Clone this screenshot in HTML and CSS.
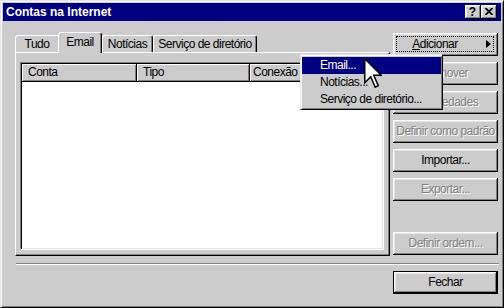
FILE: index.html
```html
<!DOCTYPE html>
<html lang="pt">
<head>
<meta charset="utf-8">
<title>Contas na Internet</title>
<link rel="stylesheet" href="styles.css">
</head>
<body>
<div class="window">
  <div class="titlebar">
    <span class="title">Contas na Internet</span>
    <div class="tbtns">
      <span class="tbtn help">?</span>
      <span class="tbtn close"><svg width="8" height="7" viewBox="0 0 8 7"><path d="M0.5 0 L7.5 7 M7.5 0 L0.5 7" stroke="#000" stroke-width="1.7" fill="none"/></svg></span>
    </div>
  </div>
  <div class="content">
    <div class="main">
      <div class="tabctl">
        <div class="tabstrip">
          <div class="tab t1">Tudo</div>
          <div class="tab t2 sel">Email</div>
          <div class="tab t3">Notícias</div>
          <div class="tab t4">Serviço de diretório</div>
        </div>
        <div class="panel">
          <div class="listbox">
            <div class="lhead">
              <div class="col c1">Conta</div>
              <div class="col c2">Tipo</div>
              <div class="col c3">Conexão</div>
            </div>
          </div>
        </div>
      </div>
      <div class="btncol">
        <button class="btn add"><span class="lbl"><u>A</u>dicionar</span><span class="arrow"></span><span class="focusrect"></span></button>
        <button class="btn dis">Remover</button>
        <button class="btn dis">Propriedades</button>
        <button class="btn dis">Definir como padrão</button>
        <button class="btn">Importar...</button>
        <button class="btn dis">Exportar...</button>
        <button class="btn dis last">Definir ordem...</button>
      </div>
    </div>
    <div class="sep"></div>
    <div class="bottom">
      <button class="btn default">Fechar</button>
    </div>
  </div>
  <div class="menu">
    <div class="mi hl">Email...</div>
    <div class="mi">Notícias...</div>
    <div class="mi">Serviço de diretório...</div>
  </div>
  <svg class="cursor" width="18" height="30" viewBox="0 0 12 20"><path d="M0.5 0.5 V16.5 L4.5 12.5 L7.5 19.5 L9.5 18.5 L6.5 11.5 H11.5 Z" fill="#fff" stroke="#000" stroke-width="1" stroke-linejoin="miter"/></svg>
</div>
</body>
</html>
```
FILE: styles.css
```css
html, body {
  margin: 0;
  padding: 0;
  background: #cccccc;
}
body {
  font-family: "Liberation Sans", Arial, sans-serif;
  font-size: 12px;
  letter-spacing: -0.5px;
  color: #000;
}
.window {
  position: relative;
  width: 504px;
  height: 308px;
  box-sizing: border-box;
  border: 1px solid;
  border-color: #e4e4e4 #000 #000 #e4e4e4;
  box-shadow: inset 1px 1px #fff, inset -1px -1px #808080;
  padding: 2px;
  background: #cccccc;
  display: flex;
  flex-direction: column;
  overflow: hidden;
}
.titlebar {
  height: 18px;
  flex: none;
  background: #000080;
  color: #fff;
  display: flex;
  align-items: center;
  justify-content: space-between;
  padding: 0 4px 0 3px;
}
.title {
  font-weight: bold;
  letter-spacing: 0;
  line-height: 18px;
}
.tbtns {
  display: flex;
}
.tbtn {
  width: 16px;
  height: 14px;
  box-sizing: border-box;
  background: #cccccc;
  box-shadow: inset -1px -1px #000, inset 1px 1px #fff, inset -2px -2px #808080, inset 2px 2px #e4e4e4;
  display: flex;
  align-items: center;
  justify-content: center;
  color: #000;
  font-weight: bold;
  font-size: 12px;
  letter-spacing: 0;
  line-height: 14px;
}
.tbtn.help {
  padding: 0 1px 1px 0;
}
.tbtn.close svg {
  display: block;
  margin: 0 1px 1px 0;
}
.content {
  flex: 1;
  padding: 11px 3px 0 12px;
  display: flex;
  flex-direction: column;
}
.main {
  display: flex;
  gap: 3px;
  height: 224px;
}
.tabctl {
  width: 375px;
  display: flex;
  flex-direction: column;
}
.tabstrip {
  height: 20px;
  display: flex;
  align-items: flex-end;
  position: relative;
  z-index: 1;
}
.tab {
  height: 17px;
  box-sizing: border-box;
  border-top: 1px solid #fff;
  border-left: 1px solid #fff;
  border-right: 1px solid #000;
  box-shadow: inset -1px 0 #808080;
  border-radius: 3px 3px 0 0;
  text-align: center;
  padding-top: 1px;
  line-height: 15px;
  white-space: nowrap;
  background: #cccccc;
}
.tab.sel {
  height: 21px;
  margin-bottom: -1px;
  padding-top: 2px;
}
.t1 { width: 43px; border-right: none; box-shadow: none; border-radius: 3px 0 0 0; }
.t2 { width: 44px; }
.t3 { width: 51px; }
.t4 { width: 104px; }
.panel {
  height: 204px;
  box-sizing: border-box;
  border: 1px solid;
  border-color: #fff #000 #000 #fff;
  box-shadow: inset -1px -1px #808080;
  padding: 9px 5px 5px 4px;
}
.listbox {
  height: 188px;
  box-sizing: border-box;
  border: 1px solid;
  border-color: #808080 #fff #fff #808080;
  box-shadow: inset 1px 1px #000, inset -1px -1px #e4e4e4;
  background: #fff;
  padding: 1px;
}
.lhead {
  display: flex;
  height: 18px;
}
.col {
  box-sizing: border-box;
  height: 18px;
  background: #cccccc;
  box-shadow: inset -1px -1px #000, inset 1px 1px #fff, inset -2px -2px #808080;
  line-height: 17px;
  padding-left: 6px;
  white-space: nowrap;
  overflow: hidden;
}
.c1 { width: 115px; }
.c2 { width: 113px; }
.c3 { flex: 1; padding-left: 3px; }
.btncol {
  width: 105px;
  display: flex;
  flex-direction: column;
  gap: 6px;
  padding-top: 1px;
}
.btn {
  position: relative;
  height: 23px;
  width: 105px;
  flex: none;
  box-sizing: border-box;
  border: none;
  margin: 0;
  padding: 0;
  background: #cccccc;
  box-shadow: inset -1px -1px #000, inset 1px 1px #fff, inset -2px -2px #808080, inset 2px 2px #e4e4e4;
  font: inherit;
  letter-spacing: inherit;
  color: #000;
  text-align: center;
  line-height: 21px;
  white-space: nowrap;
}
.btn.dis {
  color: #808080;
  text-shadow: 1px 1px #fff;
}
.btn.last {
  margin-top: auto;
  margin-bottom: 1px;
}
.btn.add .lbl {
  display: block;
  padding-right: 21px;
}
.arrow {
  position: absolute;
  right: 7px;
  top: 7px;
  width: 0;
  height: 0;
  border-left: 5px solid #000;
  border-top: 4.5px solid transparent;
  border-bottom: 4.5px solid transparent;
}
.focusrect {
  position: absolute;
  top: 3px;
  left: 3px;
  right: 4px;
  bottom: 4px;
  border: 1px dotted #000;
}
.sep {
  height: 2px;
  box-sizing: border-box;
  margin: 7px -1px 0 1px;
  border-top: 1px solid #808080;
  border-bottom: 1px solid #fff;
}
.bottom {
  display: flex;
  justify-content: flex-end;
  margin-top: 6px;
}
.btn.default {
  border: 1px solid #000;
  line-height: 19px;
}
.menu {
  position: absolute;
  left: 299px;
  top: 53px;
  width: 143px;
  box-sizing: border-box;
  border: 1px solid;
  border-color: #e4e4e4 #000 #000 #e4e4e4;
  box-shadow: inset 1px 1px #fff, inset -1px -1px #808080;
  padding: 2px 1px 1px 1px;
  background: #cccccc;
  z-index: 5;
}
.mi {
  height: 17px;
  line-height: 17px;
  padding-left: 18px;
  white-space: nowrap;
}
.mi.hl {
  background: #000080;
  color: #fff;
}
.cursor {
  position: absolute;
  left: 363px;
  top: 57px;
  z-index: 6;
}
```
